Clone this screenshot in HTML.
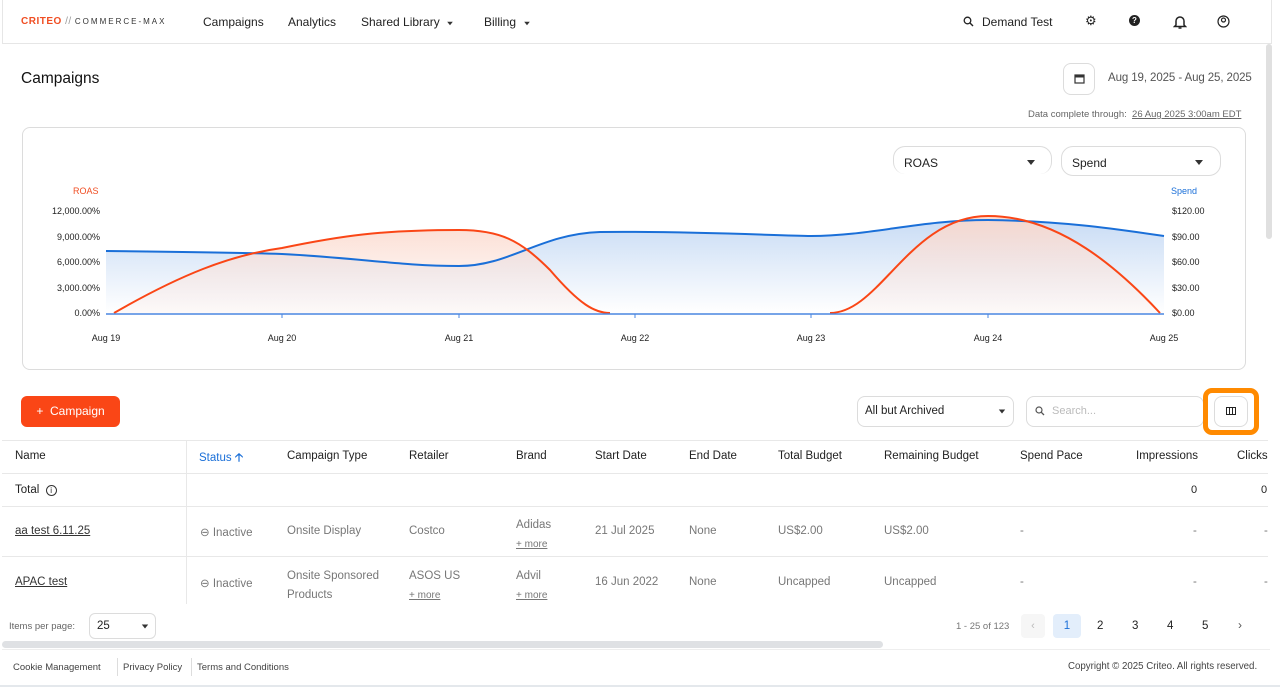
<!DOCTYPE html>
<html><head><meta charset="utf-8"><style>
*{box-sizing:border-box;margin:0;padding:0}
body{width:1280px;height:687px;overflow:hidden;background:#fff;font-family:"Liberation Sans",sans-serif;color:#222;position:relative}
.a{position:absolute;white-space:nowrap}
.nav{font-size:12px;color:#222}
.th{font-size:11.5px;color:#222;top:450px}
.td{font-size:11.5px;color:#777}
.line{position:absolute;left:2px;width:1266px;height:1px;background:#e8e8e8}
.u{text-decoration:underline}
.box{position:absolute;border:1px solid #dcdcdc;border-radius:8px;background:#fff}
.tri{display:inline-block;width:0;height:0;border-left:4px solid transparent;border-right:4px solid transparent;border-top:5px solid #333}
</style></head><body>
<div class="a" style="left:2px;top:0;width:1270px;height:44px;border:1px solid #e6e6e6;border-top:none;background:#fff"></div>
<div class="a" style="left:21px;top:16px;font-size:10px;font-weight:bold;color:#f04e23;letter-spacing:0.5px">CRITEO <span style="color:#999;font-weight:normal">//</span> <span style="color:#333;font-weight:normal;letter-spacing:2px;font-size:8px">COMMERCE-MAX</span></div>
<div class="a nav" style="left:203px;top:15px">Campaigns</div>
<div class="a nav" style="left:288px;top:15px">Analytics</div>
<div class="a nav" style="left:361px;top:15px">Shared Library &nbsp;<span class="tri" style="transform:scale(.7)"></span></div>
<div class="a nav" style="left:484px;top:15px">Billing &nbsp;<span class="tri" style="transform:scale(.7)"></span></div>
<svg class="a" style="left:963px;top:16px" width="11" height="11"><circle cx="4.5" cy="4.5" r="3.3" fill="none" stroke="#222" stroke-width="1.3"/><line x1="7" y1="7" x2="10" y2="10" stroke="#222" stroke-width="1.4"/></svg>
<div class="a nav" style="left:982px;top:15px">Demand Test</div>
<div class="a" style="left:1085px;top:13px;font-size:13px">&#9881;</div>
<div class="a" style="left:1129px;top:15px;width:11px;height:11px;border-radius:50%;background:#222;color:#fff;font-size:8px;text-align:center;line-height:11px;font-weight:bold">?</div>
<svg class="a" style="left:1173px;top:14px" width="14" height="16" viewBox="0 0 14 16"><path d="M3 11V7a4 4 0 018 0v4l1.5 1.5h-11z" fill="none" stroke="#222" stroke-width="1.5"/><path d="M5.5 14h3" stroke="#222" stroke-width="1.5"/></svg>
<svg class="a" style="left:1217px;top:15px" width="13" height="13"><circle cx="6.5" cy="6.5" r="5.5" fill="none" stroke="#222" stroke-width="1.2"/><circle cx="6.5" cy="5" r="2" fill="none" stroke="#222" stroke-width="1.2"/></svg>
<div class="a" style="left:1266px;top:44px;width:6px;height:195px;background:#e0e0e0;border-radius:3px"></div>

<div class="a" style="left:21px;top:70px;font-size:15.5px;color:#111">Campaigns</div>
<div class="box" style="left:1063px;top:63px;width:32px;height:32px"></div>
<svg class="a" style="left:1074px;top:73px" width="11" height="11"><rect x="1" y="2" width="9" height="8" fill="none" stroke="#333" stroke-width="1.2"/><rect x="1" y="2" width="9" height="2.5" fill="#333"/></svg>
<div class="a" style="left:1108px;top:72px;font-size:11.5px;color:#555;letter-spacing:-0.1px">Aug 19, 2025 - Aug 25, 2025</div>
<div class="a" style="left:1028px;top:109px;font-size:9.5px;color:#666">Data complete through: &nbsp;<span class="u">26 Aug 2025 3:00am EDT</span></div>

<div class="box" style="left:22px;top:127px;width:1224px;height:243px"></div>
<div class="box" style="left:893px;top:146px;width:159px;border-radius:12px;border-bottom:none;height:28px"></div>
<div class="a" style="left:904px;top:156px;font-size:12px">ROAS</div><span class="a tri" style="left:1027px;top:160px"></span>
<div class="box" style="left:1061px;top:146px;width:160px;height:30px;border-radius:12px"></div>
<div class="a" style="left:1072px;top:156px;font-size:12px">Spend</div><span class="a tri" style="left:1195px;top:160px"></span>

<div class="a" style="left:73px;top:186px;font-size:9px;color:#f04e23">ROAS</div>
<div class="a" style="left:1171px;top:186px;font-size:9px;color:#1a6fd8">Spend</div>
<div class="a" style="left:0;top:199px;width:100px;text-align:right;font-size:9px;line-height:25.5px">12,000.00%<br>9,000.00%<br>6,000.00%<br>3,000.00%<br>0.00%</div>
<div class="a" style="left:1172px;top:199px;font-size:9px;line-height:25.5px">$120.00<br>$90.00<br>$60.00<br>$30.00<br>$0.00</div>
<svg class="a" style="left:0;top:0" width="1280" height="360">
<defs>
<linearGradient id="gb" x1="0" y1="0" x2="0" y2="1"><stop offset="0" stop-color="#c9dcf5"/><stop offset="1" stop-color="#ffffff"/></linearGradient>
<linearGradient id="go" x1="0" y1="0" x2="0" y2="1"><stop offset="0" stop-color="#fcd6c8" stop-opacity=".9"/><stop offset="1" stop-color="#fbece8" stop-opacity=".3"/></linearGradient>
</defs>
<path d="M106 251 C200 252 250 253 282 254 C360 258 400 266 459 266 C510 266 540 234 600 232 C700 231 780 236 811 236 C870 236 920 220 988 220 C1060 221 1110 228 1164 236 L1164 313 L106 313Z" fill="url(#gb)"/>
<path d="M114 313 C180 275 230 255 282 248 C340 236 380 230 459 230 C500 230 520 240 550 270 C580 305 595 313 610 313 L830 313 C880 313 910 216 988 216 C1060 216 1120 270 1160 313Z" fill="url(#go)"/>
<path d="M106 251 C200 252 250 253 282 254 C360 258 400 266 459 266 C510 266 540 234 600 232 C700 231 780 236 811 236 C870 236 920 220 988 220 C1060 221 1110 228 1164 236" fill="none" stroke="#1a6fd8" stroke-width="2"/>
<path d="M114 313 C180 275 230 255 282 248 C340 236 380 230 459 230 C500 230 520 240 550 270 C580 305 595 313 610 313 M830 313 C880 313 910 216 988 216 C1060 216 1120 270 1160 313" fill="none" stroke="#fa4616" stroke-width="2"/>
<line x1="106" y1="314" x2="1164" y2="314" stroke="#4a86e0" stroke-width="1.5"/>
<g stroke="#4a86e0"><line x1="282" y1="314" x2="282" y2="318"/><line x1="459" y1="314" x2="459" y2="318"/><line x1="635" y1="314" x2="635" y2="318"/><line x1="811" y1="314" x2="811" y2="318"/><line x1="988" y1="314" x2="988" y2="318"/></g>
<g font-family="Liberation Sans" font-size="9" fill="#222" text-anchor="middle"><text x="106" y="341">Aug 19</text><text x="282" y="341">Aug 20</text><text x="459" y="341">Aug 21</text><text x="635" y="341">Aug 22</text><text x="811" y="341">Aug 23</text><text x="988" y="341">Aug 24</text><text x="1164" y="341">Aug 25</text></g>
</svg>

<div class="a" style="left:21px;top:396px;width:99px;height:31px;background:#fa4616;border-radius:6px;color:#fff;font-size:12px;line-height:31px;text-align:center">+&nbsp; Campaign</div>
<div class="box" style="left:857px;top:396px;width:157px;height:31px"></div>
<div class="a" style="left:865px;top:405px;font-size:11.5px">All but Archived</div><span class="a tri" style="left:998px;top:409px;transform:scale(.8)"></span>
<div class="box" style="left:1026px;top:396px;width:178px;height:31px"></div>
<svg class="a" style="left:1035px;top:406px" width="10" height="10"><circle cx="4" cy="4" r="3" fill="none" stroke="#555" stroke-width="1.2"/><line x1="6.2" y1="6.2" x2="9" y2="9" stroke="#555" stroke-width="1.3"/></svg>
<div class="a" style="left:1052px;top:405px;font-size:11px;color:#bbb">Search...</div>
<div class="a" style="left:1203px;top:388px;width:56px;height:47px;border:5px solid #ff8a00;border-radius:9px"></div>
<div class="box" style="left:1214px;top:396px;width:34px;height:31px"></div>
<svg class="a" style="left:1226px;top:407px" width="10" height="8"><rect x=".5" y=".5" width="9" height="7" fill="none" stroke="#222"/><line x1="3.5" y1="0" x2="3.5" y2="8" stroke="#222"/><line x1="6.5" y1="0" x2="6.5" y2="8" stroke="#222"/></svg>

<div class="line" style="top:440px"></div>
<div class="line" style="top:473px"></div>
<div class="line" style="top:506px"></div>
<div class="line" style="top:556px"></div>
<div class="a" style="left:186px;top:440px;width:1px;height:165px;background:#e8e8e8"></div>
<div class="a th" style="left:15px">Name</div>
<div class="a th" style="left:199px;color:#1a6fd8">Status <b>&#129121;</b></div>
<div class="a th" style="left:287px">Campaign Type</div>
<div class="a th" style="left:409px">Retailer</div>
<div class="a th" style="left:516px">Brand</div>
<div class="a th" style="left:595px">Start Date</div>
<div class="a th" style="left:689px">End Date</div>
<div class="a th" style="left:778px">Total Budget</div>
<div class="a th" style="left:884px">Remaining Budget</div>
<div class="a th" style="left:1020px">Spend Pace</div>
<div class="a th" style="left:1136px">Impressions</div>
<div class="a th" style="left:1237px">Clicks</div>
<div class="a" style="left:15px;top:484px;font-size:11.5px">Total &nbsp;<span style="display:inline-block;width:11px;height:11px;border:1px solid #333;border-radius:50%;font-size:8px;text-align:center;line-height:9px">i</span></div>
<div class="a" style="left:1191px;top:484px;font-size:11px">0</div>
<div class="a" style="left:1261px;top:484px;font-size:11px">0</div>

<div class="a u" style="left:15px;top:525px;font-size:11.5px;color:#333">aa test 6.11.25</div>
<div class="a td" style="left:200px;top:525px">&#8854; Inactive</div>
<div class="a td" style="left:287px;top:525px">Onsite Display</div>
<div class="a td" style="left:409px;top:525px">Costco</div>
<div class="a td" style="left:516px;top:516px;line-height:19px">Adidas<br><span class="u" style="font-size:10px">+ more</span></div>
<div class="a td" style="left:595px;top:525px">21 Jul 2025</div>
<div class="a td" style="left:689px;top:525px">None</div>
<div class="a td" style="left:778px;top:525px">US$2.00</div>
<div class="a td" style="left:884px;top:525px">US$2.00</div>
<div class="a td" style="left:1020px;top:525px">-</div>
<div class="a td" style="left:1193px;top:525px">-</div>
<div class="a td" style="left:1264px;top:525px">-</div>

<div class="a u" style="left:15px;top:576px;font-size:11.5px;color:#333">APAC test</div>
<div class="a td" style="left:200px;top:576px">&#8854; Inactive</div>
<div class="a td" style="left:287px;top:567px;line-height:19px">Onsite Sponsored<br>Products</div>
<div class="a td" style="left:409px;top:567px;line-height:19px">ASOS US<br><span class="u" style="font-size:10px">+ more</span></div>
<div class="a td" style="left:516px;top:567px;line-height:19px">Advil<br><span class="u" style="font-size:10px">+ more</span></div>
<div class="a td" style="left:595px;top:576px">16 Jun 2022</div>
<div class="a td" style="left:689px;top:576px">None</div>
<div class="a td" style="left:778px;top:576px">Uncapped</div>
<div class="a td" style="left:884px;top:576px">Uncapped</div>
<div class="a td" style="left:1020px;top:576px">-</div>
<div class="a td" style="left:1193px;top:576px">-</div>
<div class="a td" style="left:1264px;top:576px">-</div>

<div class="a" style="left:0;top:604px;width:1280px;height:83px;background:#fff"></div>
<div class="a" style="left:9px;top:621px;font-size:9.5px;color:#666">Items per page:</div>
<div class="box" style="left:89px;top:613px;width:67px;height:26px;border-radius:6px"></div>
<div class="a" style="left:97px;top:620px;font-size:11.5px">25</div><span class="a tri" style="left:141px;top:624px;transform:scale(.8)"></span>
<div class="a" style="left:956px;top:621px;font-size:9.5px;color:#777">1 - 25 of 123</div>
<div class="a" style="left:1021px;top:614px;width:24px;height:24px;background:#f6f6f6;border-radius:4px;color:#bbb;font-size:11px;text-align:center;line-height:24px">&#8249;</div>
<div class="a" style="left:1053px;top:614px;width:28px;height:24px;background:#e3eefb;border-radius:4px;color:#1a6fd8;font-size:11.5px;text-align:center;line-height:24px">1</div>
<div class="a" style="left:1097px;top:620px;font-size:11.5px">2</div>
<div class="a" style="left:1132px;top:620px;font-size:11.5px">3</div>
<div class="a" style="left:1167px;top:620px;font-size:11.5px">4</div>
<div class="a" style="left:1202px;top:620px;font-size:11.5px">5</div>
<div class="a" style="left:1238px;top:618px;font-size:12px;color:#555">&#8250;</div>
<div class="a" style="left:2px;top:641px;width:881px;height:7px;background:#dfe1e4;border-radius:4px"></div>
<div class="a" style="left:2px;top:649px;width:1268px;height:1px;background:#eee"></div>
<div class="a" style="left:13px;top:662px;font-size:9.5px;color:#444">Cookie Management</div>
<div class="a" style="left:117px;top:658px;width:1px;height:18px;background:#ddd"></div>
<div class="a" style="left:123px;top:662px;font-size:9.5px;color:#444">Privacy Policy</div>
<div class="a" style="left:191px;top:658px;width:1px;height:18px;background:#ddd"></div>
<div class="a" style="left:197px;top:662px;font-size:9.5px;color:#444">Terms and Conditions</div>
<div class="a" style="left:1068px;top:661px;font-size:9.7px;color:#444">Copyright © 2025 Criteo. All rights reserved.</div>
<div class="a" style="left:0;top:685px;width:1280px;height:2px;background:#e4e8ec"></div>
</body></html>
